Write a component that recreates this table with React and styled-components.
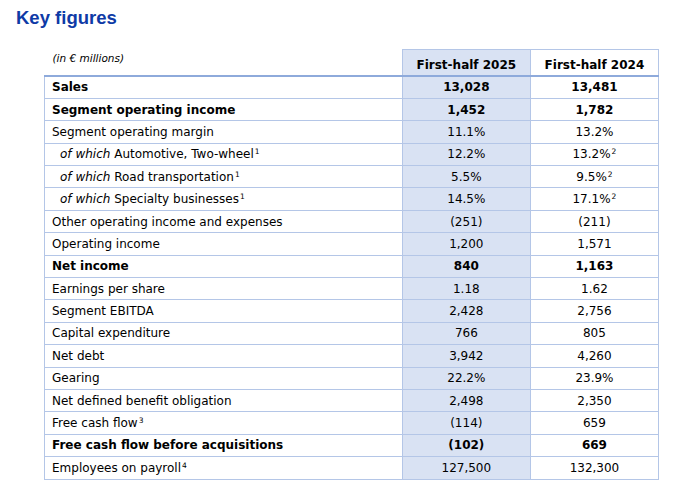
import React from 'react'
import styled, { createGlobalStyle } from 'styled-components'

const GlobalStyle = createGlobalStyle`
  html, body {
    margin: 0;
    padding: 0;
    background: #ffffff;
  }
`

const rows = [
  { label: 'Sales', a: '13,028', b: '13,481', bold: true },
  { label: 'Segment operating income', a: '1,452', b: '1,782', bold: true },
  { label: 'Segment operating margin', a: '11.1%', b: '13.2%' },
  { pre: 'of which', label: 'Automotive, Two-wheel', sup: '1', a: '12.2%', b: '13.2%', bsup: '2' },
  { pre: 'of which', label: 'Road transportation', sup: '1', a: '5.5%', b: '9.5%', bsup: '2' },
  { pre: 'of which', label: 'Specialty businesses', sup: '1', a: '14.5%', b: '17.1%', bsup: '2' },
  { label: 'Other operating income and expenses', a: '(251)', b: '(211)' },
  { label: 'Operating income', a: '1,200', b: '1,571' },
  { label: 'Net income', a: '840', b: '1,163', bold: true },
  { label: 'Earnings per share', a: '1.18', b: '1.62' },
  { label: 'Segment EBITDA', a: '2,428', b: '2,756' },
  { label: 'Capital expenditure', a: '766', b: '805' },
  { label: 'Net debt', a: '3,942', b: '4,260' },
  { label: 'Gearing', a: '22.2%', b: '23.9%' },
  { label: 'Net defined benefit obligation', a: '2,498', b: '2,350' },
  { label: 'Free cash flow', sup: '3', a: '(114)', b: '659' },
  { label: 'Free cash flow before acquisitions', a: '(102)', b: '669', bold: true },
  { label: 'Employees on payroll', sup: '4', a: '127,500', b: '132,300' },
]

const App = () => {
  return (
    <Page>
      <GlobalStyle />
      <Title>Key figures</Title>
      <Table>
        <thead>
          <tr>
            <NoteCell>(in € millions)</NoteCell>
            <HeadCell $shaded>First-half 2025</HeadCell>
            <HeadCell>First-half 2024</HeadCell>
          </tr>
        </thead>
        <tbody>
          {rows.map((r) => (
            <Row key={r.label} $bold={r.bold}>
              <LabelCell $indent={!!r.pre}>
                {r.pre && <em>{r.pre} </em>}
                {r.label}
                {r.sup && <Sup>{r.sup}</Sup>}
              </LabelCell>
              <ValueCell $shaded>{r.a}</ValueCell>
              <ValueCell>
                {r.b}
                {r.bsup && <Sup>{r.bsup}</Sup>}
              </ValueCell>
            </Row>
          ))}
        </tbody>
      </Table>
    </Page>
  )
}

const Page = styled.div`
  padding: 6px 0 0 16px;
  font-family: 'DejaVu Sans', Verdana, sans-serif;
  color: #000;
`

const Title = styled.h1`
  margin: 0 0 19px 0;
  font-family: 'Liberation Sans', Arial, sans-serif;
  font-size: 18.5px;
  font-weight: bold;
  color: #0e3aa6;
  line-height: 24px;
`

const Table = styled.table`
  margin-left: 28px;
  width: 615px;
  border-collapse: collapse;
  table-layout: fixed;
  font-size: 12px;
`

const NoteCell = styled.th`
  width: 349px;
  text-align: left;
  vertical-align: top;
  font-style: italic;
  font-weight: normal;
  font-size: 10.5px;
  padding: 2px 0 0 8px;
  border-bottom: 2px solid #8eaadb;
`

const HeadCell = styled.th`
  width: 127px;
  height: 20px;
  padding: 5px 0 0 0;
  text-align: center;
  font-weight: bold;
  font-size: 12px;
  background: ${(p) => (p.$shaded ? '#d9e2f3' : '#ffffff')};
  border: 1px solid #b4c6e7;
  border-bottom: 2px solid #8eaadb;
`

const Row = styled.tr`
  height: 22.4px;
  font-weight: ${(p) => (p.$bold ? 'bold' : 'normal')};
`

const LabelCell = styled.td`
  padding: 0 0 0 ${(p) => (p.$indent ? '15px' : '7px')};
  border: 1px solid #b4c6e7;
  white-space: nowrap;
`

const ValueCell = styled.td`
  text-align: center;
  padding: 0;
  background: ${(p) => (p.$shaded ? '#d9e2f3' : '#ffffff')};
  border: 1px solid #b4c6e7;
`

const Sup = styled.sup`
  font-size: 7.5px;
  line-height: 0;
  vertical-align: 4px;
  margin-left: 1px;
`

export default App
